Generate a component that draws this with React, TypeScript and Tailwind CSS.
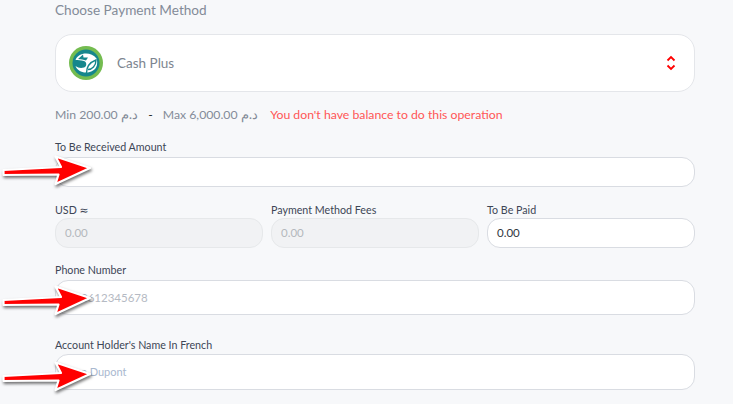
import type { ReactNode } from "react";

const font = { fontFamily: '"Lato", "Noto Sans", sans-serif' };
const arabic = { fontFamily: '"Noto Sans", sans-serif' };
const symbol = { fontFamily: '"DejaVu Sans", sans-serif' };

function Arrow() {
  return (
    <svg width="94" height="36" viewBox="0 0 94 36" className="absolute" style={{ filter: "drop-shadow(1px 2px 1.5px rgba(0,0,0,0.55))" }}>
      <path d="M3.5 16 L61 13 L55.5 2.5 L90 14 L55.5 30 L58.5 20.5 L3.5 21 Z" fill="#ff0000" stroke="#ffffff" strokeWidth="2.2" strokeLinejoin="round" />
    </svg>
  );
}

function Logo() {
  return (
    <svg width="34" height="34" viewBox="0 0 34 34">
      <circle cx="17" cy="17" r="17" fill="#74bc50" />
      <circle cx="17" cy="17" r="13.5" fill="#15868c" />
      <path d="M6.5 14 C8 10 12 7.5 17 7.5 C21 7.5 25 9 27.5 12.5 C28.5 15 28.5 19 27 21.5 C25 25 21 26.5 17 26.5 C12 26.5 8 24 6.5 20 C9 22 12 22.5 15 21.5 C18 20.5 18 16 15 15 C12 14 9 14.5 6.5 14 Z" fill="#ffffff" />
      <path d="M9 13 L14 8.5 L14.5 11.5 L19 11.5 L17 14.5 C14.5 13.5 12 13.5 9 13 Z" fill="#15868c" />
      <path d="M17.5 27 C17.5 21 20.5 16.5 27 14 C27 20 23 23.5 19 23.5" fill="none" stroke="#15868c" strokeWidth="1.4" />
    </svg>
  );
}

function Field({ label, h, placeholder, placeholderClass, value, disabled, className, gap, padding }: { label: ReactNode; h: string; placeholder?: string; placeholderClass?: string; value?: string; disabled?: boolean; className?: string; gap?: string; padding?: string }) {
  return (
    <div className={className}>
      <div className="h-[14px] text-[10.7px] leading-[14px] text-[#3d4656]">{label}</div>
      <div className={`${h} ${gap ?? "mt-[3px]"} ${padding ?? "px-[9px]"} flex items-center rounded-[13px] border-[1.5px] text-[11.5px] ${disabled ? "border-[#e6e8ea] bg-[#f1f2f4] text-[#b4b8bd]" : "border-[#d9dce2] bg-white text-[#2f3640]"}`}>
        {placeholder ? <span className={placeholderClass}>{placeholder}</span> : value}
      </div>
    </div>
  );
}

export default function App() {
  return (
    <div style={font} className="relative h-[404px] w-[733px] overflow-hidden bg-[#f7f8fa] pl-[55px] pr-[38px]">
      <div className="pt-[1px] text-[13.6px] leading-[18px] text-[#838b98]">Choose Payment Method</div>
      <div className="mt-[15px] flex h-[58px] items-center rounded-[17px] border-[1.5px] border-[#e4e6ea] bg-white pl-[13px] pr-[17px]">
        <Logo />
        <span className="ml-[14px] text-[13.5px] text-[#7d8590]">Cash Plus</span>
        <svg width="12" height="16" viewBox="0 0 12 16" className="ml-auto" fill="none" stroke="#ff0000" strokeWidth="1.8">
          <path d="M2.5 5.5 L6 2 L9.5 5.5" />
          <path d="M2.5 10.5 L6 14 L9.5 10.5" />
        </svg>
      </div>
      <div className="mt-[14px] flex h-[18px] items-center text-[12.25px] text-[#838b98]">
        <span>Min 200.00 <span style={arabic} className="text-[12.8px]">د.م</span></span>
        <span className="mx-[10px] text-[#222]">-</span>
        <span>Max 6,000.00 <span style={arabic} className="text-[12.8px]">د.م</span></span>
        <span className="ml-[12px] text-[#ff5656]">You don't have balance to do this operation</span>
      </div>
      <Field label="To Be Received Amount" h="h-[30px]" className="mt-[16px]" />
      <div className="mt-[16px] grid grid-cols-3 gap-[8px]">
        <Field label={<>USD <span style={symbol}>≈</span></>} h="h-[30px]" gap="mt-[1px]" value="0.00" disabled />
        <Field label="Payment Method Fees" h="h-[30px]" gap="mt-[1px]" value="0.00" disabled />
        <Field label="To Be Paid" h="h-[30px]" gap="mt-[1px]" value="0.00" />
      </div>
      <Field label="Phone Number" h="h-[35px]" placeholder="0612345678" placeholderClass="text-[#b5bac3]" padding="pl-[25px]" className="mt-[15px]" />
      <Field label="Account Holder's Name In French" h="h-[36px]" placeholder="Jean Dupont" placeholderClass="text-[#a9b8cf] text-[11px]" gap="mt-[2px]" className="mt-[23px]" />
      <div className="absolute left-0 top-[154px]"><Arrow /></div>
      <div className="absolute left-0 top-[284px]"><Arrow /></div>
      <div className="absolute left-0 top-[360px]"><Arrow /></div>
    </div>
  );
}
